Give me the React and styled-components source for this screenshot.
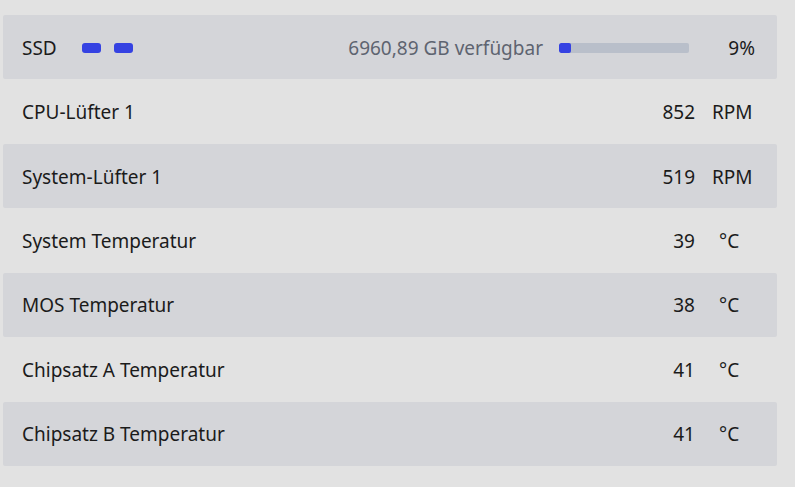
import React from "react";
import styled, { createGlobalStyle } from "styled-components";

const Global = createGlobalStyle`
  html, body { margin: 0; padding: 0; background: #e2e2e2; }
  body { font-family: "Noto Sans", "Open Sans", sans-serif; color: #1b1b1b; }
`;

const Page = styled.div`
  width: 795px;
  height: 487px;
  padding: 15px 18px 0 3px;
  box-sizing: border-box;
`;

const List = styled.div`
  display: flex;
  flex-direction: column;
`;

const Row = styled.div`
  height: 64.43px;
  display: flex;
  align-items: center;
  padding: 1px 0 0 19px;
  box-sizing: border-box;
  border-radius: 2px;
  background: ${(p) => (p.$shaded ? "#d4d5d9" : "transparent")};
  font-size: 19px;
`;

const Label = styled.div`
  flex: 1;
  display: flex;
  align-items: center;
`;

const Pills = styled.div`
  display: flex;
  gap: 13px;
  margin-left: 25px;
`;

const Pill = styled.span`
  width: 19px;
  height: 10px;
  border-radius: 3px;
  background: #3542e2;
`;

const Value = styled.div`
  text-align: right;
`;

const Unit = styled.div`
  width: 82px;
  padding-left: ${(p) => (p.$pad ? p.$pad : 0)}px;
  box-sizing: border-box;
`;

const Free = styled.div`
  color: #5e6470;
`;

const Track = styled.div`
  width: 130px;
  height: 10px;
  margin-left: 16px;
  border-radius: 2px;
  background: #b9bfca;
  overflow: hidden;
`;

const Fill = styled.div`
  height: 100%;
  background: #3542e2;
  border-radius: 2px;
`;

const Percent = styled.div`
  width: 88px;
  text-align: right;
  padding-right: 22px;
  box-sizing: border-box;
`;

const rows = [
  { name: "CPU-Lüfter 1", value: "852", unit: "RPM", pad: 17 },
  { name: "System-Lüfter 1", value: "519", unit: "RPM", pad: 17 },
  { name: "System Temperatur", value: "39", unit: "°C", pad: 24 },
  { name: "MOS Temperatur", value: "38", unit: "°C", pad: 24 },
  { name: "Chipsatz A Temperatur", value: "41", unit: "°C", pad: 24 },
  { name: "Chipsatz B Temperatur", value: "41", unit: "°C", pad: 24 },
];

export default function App() {
  const used = 9;
  return (
    <>
      <Global />
      <Page>
        <List>
          <Row $shaded>
            <Label>
              SSD
              <Pills>
                <Pill />
                <Pill />
              </Pills>
            </Label>
            <Free>6960,89 GB verfügbar</Free>
            <Track>
              <Fill style={{ width: `${used}%` }} />
            </Track>
            <Percent>{used}%</Percent>
          </Row>
          {rows.map((r, i) => (
            <Row key={r.name} $shaded={i % 2 === 1}>
              <Label>{r.name}</Label>
              <Value>{r.value}</Value>
              <Unit $pad={r.pad}>{r.unit}</Unit>
            </Row>
          ))}
        </List>
      </Page>
    </>
  );
}
